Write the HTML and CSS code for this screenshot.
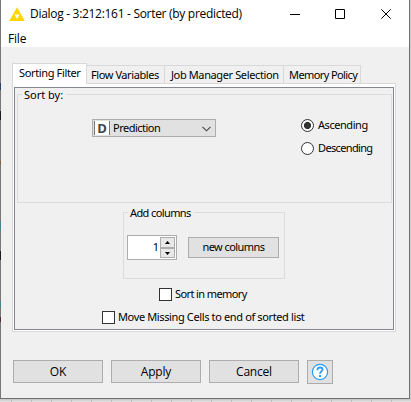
FILE: index.html
```html
<!DOCTYPE html>
<html lang="en">
<head>
<meta charset="utf-8">
<title>Dialog - 3:212:161 - Sorter (by predicted)</title>
<link rel="stylesheet" href="styles.css">
</head>
<body>
<div class="window">
  <header class="titlebar">
    <svg class="logo" width="16" height="14" viewBox="0 0 16 14"><path d="M8 .2 15.8 14H.2z" fill="#ffd500"/><path d="M5.4 7.4h5.2L8 12z" fill="#fff"/></svg>
    <span class="title">Dialog - 3:212:161 - Sorter (by predicted)</span>
    <svg class="controls" width="102" height="12" viewBox="0 0 102 12" fill="none" stroke="#000"><path d="M0 6.500h10"/><path d="M45.500 1.500h9v9h-9z"/><path d="M91.300 1.300l9.400 9.400M100.700 1.300l-9.400 9.400"/></svg>
  </header>
  <nav class="menubar"><span class="t-file">File</span></nav>
  <main class="content">
    <div class="tabs">
      <div class="tab selected"><span class="t-sorting">Sorting Filter</span></div>
      <div class="tab flow"><span class="t-flow">Flow Variables</span></div>
      <div class="tab job"><span class="t-job">Job Manager Selection</span></div>
      <div class="tab memory"><span class="t-memory">Memory Policy</span></div>
    </div>
    <div class="pane">
      <div class="pane-inner">
        <fieldset class="group sort">
          <legend><span class="t-sortby">Sort by:</span></legend>
          <div class="combo">
            <span class="type">D</span>
            <span class="t-pred">Prediction</span>
            <svg width="9" height="6" viewBox="0 0 9 6" fill="none" stroke="#444" stroke-width="1.100"><path d="M.5 .8 4.500 4.800 8.500 .8"/></svg>
          </div>
          <div class="radios">
            <div class="radio"><i class="dot on"></i><span class="t-asc">Ascending</span></div>
            <div class="radio"><i class="dot"></i><span class="t-desc">Descending</span></div>
          </div>
        </fieldset>
        <fieldset class="group add">
          <legend><span class="t-add">Add columns</span></legend>
          <div class="spinner">
            <span class="value">1</span>
            <div class="arrows">
              <b><svg width="5" height="3" viewBox="0 0 5 3"><path d="M2.500 0 5 3H0z"/></svg></b>
              <b><svg width="5" height="3" viewBox="0 0 5 3"><path d="M2.500 3 5 0H0z"/></svg></b>
            </div>
          </div>
          <div class="button new"><span class="t-new">new columns</span></div>
        </fieldset>
        <div class="check first"><i class="box"></i><span class="t-mem">Sort in memory</span></div>
        <div class="check second"><i class="box"></i><span class="t-move">Move Missing Cells to end of sorted list</span></div>
      </div>
    </div>
    <footer class="actions">
      <div class="button"><span class="t-ok">OK</span></div>
      <div class="button"><span class="t-ok">Apply</span></div>
      <div class="button"><span class="t-ok">Cancel</span></div>
      <div class="button help"><svg width="18" height="18" viewBox="0 0 18 18" fill="none" stroke="#2a9df4"><circle cx="9" cy="9" r="7.600" fill="#fff" stroke-width="1.200"/><path d="M6.500 7.200V6.500C6.500 5.200 7.500 4.500 9 4.500s2.500.8 2.500 2.100C11.500 8.500 9 8.600 9 10.700" stroke-width="1.800"/><path d="M9 12v1.900" stroke-width="1.900"/></svg></div>
    </footer>
  </main>
</div>
</body>
</html>
```

FILE: styles.css
```css
* { box-sizing: border-box; }
body {
  margin: 0;
  width: 411px;
  height: 402px;
  overflow: hidden;
  background: repeating-linear-gradient(90deg, transparent 0 11px, #c2c2c2 11px 12px, transparent 12px 20px) 0 0 / 400px 402px,
    linear-gradient(#cfcfcf 398px, #c4c4c4 399px, #e4e4e4 402px);
  font: 11px/14px "Noto Sans", sans-serif;
  color: #000;
}
span { white-space: nowrap; }
.window {
  width: 410px;
  height: 399px;
  padding-left: 1px;
  border: solid #707070;
  border-width: 0 1px 1px 0;
  background:
    linear-gradient(#777 83px, #2c3f66 83px 90px, #777 90px 111px, #1c1c1c 111px 120px, #777 120px 161px, #8a5a30 161px 164px, #777 164px 221px, #3f8488 221px 230px, #777 230px 251px, #1c1c1c 251px 260px, #777 260px 301px, #3f8488 301px 308px, #777 308px 317px, #4a2c3c 317px 322px, #777 322px) 0 0 / 1px 100% no-repeat,
    #f0f0f0;
}
.titlebar {
  display: flex;
  align-items: center;
  height: 27px;
  padding-left: 8px;
  background: #fff;
}
.title {
  width: 213px;
  margin-left: 5px;
  font: 12px/16px "Open Sans", sans-serif;
  letter-spacing: -.3px;
}
.controls { margin-left: 47px; }
.menubar {
  height: 20px;
  padding: 4px 0 0 7px;
  background: #fff;
  font: 12px/16px "Open Sans", sans-serif;
  letter-spacing: -.2px;
}
.content { padding: 16px 12px 0 11px; }
.tabs { display: flex; align-items: flex-end; height: 20px; }
.tab {
  height: 18px;
  padding: 2px 0 0 5px;
  border: 1px solid #d9d9d9;
  border-width: 1px 1px 0 0;
}
.selected {
  position: relative;
  width: 75px;
  height: 21px;
  margin-bottom: -1px;
  padding-left: 6px;
  border-left-width: 1px;
  background: #fff;
}
.flow { width: 78px; padding-left: 4px; }
.job { width: 119px; padding-left: 6px; }
.memory { width: 77px; }
.t-sorting { letter-spacing: -.36px; }
.t-flow { letter-spacing: -.42px; }
.t-job { letter-spacing: -.38px; }
.t-memory { letter-spacing: -.6px; }
.t-pred { letter-spacing: -.5px; }
.t-asc { letter-spacing: -.45px; }
.t-desc { letter-spacing: -.65px; }
.t-add, .t-mem { letter-spacing: -.6px; }
.t-new { letter-spacing: -.55px; }
.t-move { letter-spacing: -.37px; }
.t-ok { letter-spacing: -.2px; }
.pane {
  width: 384px;
  height: 249px;
  padding: 3px 1px 1px;
  border: 1px solid #d9d9d9;
  background: #fff;
}
.pane-inner {
  height: 243px;
  border: 1px solid #828790;
  background: #f0f0f0;
  padding: 0 2px;
}
.group {
  display: flex;
  margin: 0;
  padding: 0;
  border: 1px solid #dcdcdc;
  min-width: 0;
}
legend { height: 12px; padding: 0 3px 0 2px; margin-left: 4px; line-height: 13px; }
.sort { width: 375px; height: 115px; }
.combo {
  display: flex;
  align-items: center;
  width: 124px;
  height: 18px;
  margin: 19px 0 0 74px;
  padding-left: 1px;
  border: 1px solid #adadad;
  background: #e1e1e1;
}
.type {
  width: 16px;
  height: 14px;
  margin-right: 3px;
  border: solid #777;
  border-width: 0 1px;
  background: #fff;
  color: #444;
  font: bold 13px/14px "Open Sans", sans-serif;
  text-align: center;
}
.combo svg { margin: 2px 4px 0 auto; }
.radios { margin: 19px 0 0 85px; }
.radio { display: flex; align-items: center; height: 13px; margin-bottom: 10px; }
.radio span, .check span { margin-top: -1px; }
.dot {
  width: 13px;
  height: 13px;
  margin-right: 4px;
  border: 1px solid #333;
  border-radius: 50%;
  background: #fff;
}
.on { background: radial-gradient(circle, #333 0 3.2px, #fff 3.9px); }
.add { width: 162px; height: 73px; margin: 3px 0 0 106px; }
.spinner {
  display: flex;
  width: 50px;
  height: 25px;
  margin: 17px 11px 0 3px;
  padding: 1px;
  border: 1px solid #abadb3;
  background: #fff;
}
.value { width: 31px; padding: 3px 1px 0 0; text-align: right; }
.arrows { width: 15px; }
.arrows b {
  display: flex;
  align-items: center;
  justify-content: center;
  height: 11px;
  border: 1px solid #adadad;
  background: #e8e8e8;
}
.arrows b + b { height: 10px; }
.button {
  display: flex;
  align-items: center;
  justify-content: center;
  width: 90px;
  height: 23px;
  border: 1px solid #adadad;
  background: #e1e1e1;
}
.new { width: 91px; height: 21px; margin-top: 19px; padding-bottom: 1px; }
.check { display: flex; align-items: center; height: 13px; }
.box {
  width: 13px;
  height: 13px;
  margin-right: 3px;
  border: 1px solid #333;
  background: #fff;
}
.first { margin: 9px 0 10px 142px; }
.second { margin-left: 85px; }
.actions { display: flex; gap: 8px; padding: 28px 0 0 1px; }
.actions .button { font: 12px/16px "Open Sans", sans-serif; }
.actions .help { width: 26px; height: 24px; }
```
